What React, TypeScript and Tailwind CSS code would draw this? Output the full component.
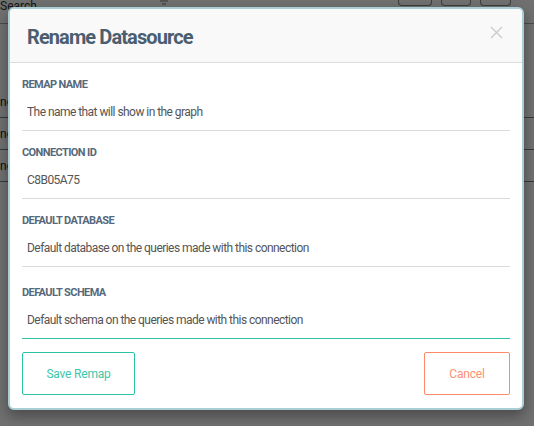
import React, { useState } from 'react';

const fields = [
  { label: 'Remap Name', placeholder: 'The name that will show in the graph', value: '' },
  { label: 'Connection ID', placeholder: '', value: 'C8B05A75' },
  { label: 'Default Database', placeholder: 'Default database on the queries made with this connection', value: '' },
  { label: 'Default Schema', placeholder: 'Default schema on the queries made with this connection', value: '' },
];

// the page that sits behind the dimmed overlay
const Backdrop: React.FC = () => (
  <div className="absolute inset-0 bg-white text-[#333]">
    <div className="flex items-start h-[24px] border-b border-[#aaa]">
      <span className="text-[12px] leading-[12px] text-[#333]">Search</span>
      <svg className="ml-[122px]" width="10" height="6" viewBox="0 0 10 6" stroke="#777" strokeWidth="1">
        <path d="M1 1H9M3 4H7" />
      </svg>
      <div className="ml-auto flex gap-[9px] mr-[23px]">
        <div className="w-[34px] h-[6px] border border-t-0 border-[#888] rounded-b" />
        <div className="w-[30px] h-[6px] border border-t-0 border-[#888] rounded-b" />
        <div className="w-[31px] h-[6px] border border-t-0 border-[#888] rounded-b" />
      </div>
    </div>
    <div className="mt-[62px] flex flex-col">
      {[0, 1, 2].map((i) => (
        <div key={i} className="h-[32px] border-b border-[#6f8a90] flex items-center text-[12px] text-[#222]">
          <span>ne</span>
        </div>
      ))}
    </div>
  </div>
);

const App: React.FC = () => {
  const [values, setValues] = useState(fields.map((f) => f.value));

  return (
    <div className="relative w-[534px] h-[426px] overflow-hidden font-[Roboto,'Liberation_Sans',sans-serif]">
      <Backdrop />
      <div className="absolute inset-0 bg-black/[0.56] pl-[8px] pt-[7px]">
        <div className="w-[516px] bg-white border-2 border-[#a9cfd4] rounded-[6px] shadow-[0_6px_14px_rgba(0,0,0,0.35)] overflow-hidden">
          <div className="flex items-center justify-between h-[54px] bg-[#f9f9f9] border-b border-[#dcdcdc] pl-[17px] pr-[19px]">
            <h2 className="text-[20px] font-bold tracking-[-0.9px] text-[#4a5e70] mt-[2px]">Rename Datasource</h2>
            <button className="text-[#cacaca] -mt-[6px]">
              <svg width="13" height="13" viewBox="0 0 13 13" fill="none" stroke="currentColor" strokeWidth="1.3">
                <path d="M1 1L12 12M12 1L1 12" />
              </svg>
            </button>
          </div>
          <div className="px-[12px] pb-[13px]">
            {fields.map((f, i) => (
              <div key={f.label} className={i === 3 ? 'pt-[18px]' : 'pt-[14px]'}>
                <label className="block text-[11px] leading-[16px] font-bold uppercase tracking-[-0.6px] text-[#56697b]">
                  {f.label}
                </label>
                <input
                  value={values[i]}
                  placeholder={f.placeholder}
                  onChange={(e) => setValues(values.map((v, j) => (j === i ? e.target.value : v)))}
                  className={`w-full h-[38px] px-[5px] text-[12px] tracking-[-0.55px] text-[#555] placeholder:text-[#555] outline-none border-b ${
                    i === 3 ? 'border-[#2cc3a5]' : 'border-[#dadada]'
                  }`}
                />
              </div>
            ))}
            <div className="flex justify-between mt-[13px]">
              <button className="w-[113px] h-[43px] border border-[#2cc3a5] rounded-[2px] text-[12px] tracking-[-0.2px] text-[#3ec6ab]">
                Save Remap
              </button>
              <button className="w-[86px] h-[43px] border border-[#ff8a6a] rounded-[2px] text-[12px] tracking-[-0.2px] text-[#ff8f72]">
                Cancel
              </button>
            </div>
          </div>
        </div>
      </div>
    </div>
  );
};

export default App;
